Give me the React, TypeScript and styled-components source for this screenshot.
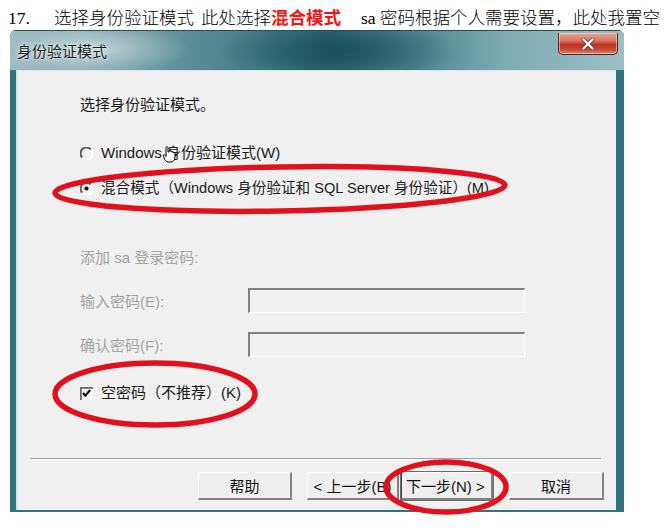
import React from "react";
import styled, { createGlobalStyle } from "styled-components";

const Global = createGlobalStyle`
  html, body { margin: 0; padding: 0; background: #ffffff; }
  body { width: 670px; height: 528px; overflow: hidden; }
  #root { width: 670px; height: 528px; }
`;

const Page = styled.div`
  position: relative;
  width: 670px;
  height: 528px;
  padding-top: 8px;
  box-sizing: border-box;
`;

const Heading = styled.p`
  margin: 0;
  padding-left: 8px;
  height: 20px;
  line-height: 20px;
  font-family: "Liberation Serif", "Noto Sans CJK SC", serif;
  font-size: 17.5px;
  font-weight: 300;
  color: #000;
  white-space: nowrap;
`;

const Num = styled.span`
  display: inline-block;
  width: 46px;
  font-weight: 400;
`;

const Red = styled.span`
  color: #ff1010;
  font-weight: bold;
`;

const Gap = styled.span<{ $w: number }>`
  display: inline-block;
  width: ${(p) => p.$w}px;
`;

const Window = styled.div`
  margin: 2px 0 0 10px;
  width: 614px;
  height: 482px;
  display: flex;
  flex-direction: column;
  border-radius: 6px 6px 0 0;
  overflow: hidden;
  background: #2f7480;
`;

const TitleBar = styled.div`
  height: 40px;
  flex: none;
  display: flex;
  align-items: flex-start;
  justify-content: space-between;
  padding: 0 6px 0 7px;
  box-sizing: border-box;
  border-top: 1px solid #244f57;
  background:
    radial-gradient(ellipse 120px 30px at 330px 20px, rgba(20, 70, 85, 0.75), rgba(20, 70, 85, 0) 100%),
    radial-gradient(ellipse 90px 25px at 90px 18px, rgba(230, 240, 240, 0.55), rgba(230, 240, 240, 0) 100%),
    linear-gradient(90deg, #9fbcc2 0%, #8fb0b7 12%, #5f8f99 28%, #3f7884 42%, #2b6673 52%, #4d8591 66%, #7eaab2 80%, #9dbfc5 100%);
`;

const TitleText = styled.span`
  margin-top: 10px;
  font-family: "Noto Sans CJK SC", sans-serif;
  font-size: 15px;
  line-height: 20px;
  color: #1c1c1c;
  text-shadow: 0 0 6px rgba(255, 255, 255, 0.9), 0 0 2px rgba(255, 255, 255, 0.8);
`;

const CloseButton = styled.div`
  margin-top: 2px;
  width: 60px;
  height: 22px;
  box-sizing: border-box;
  border: 1px solid #4a2320;
  border-top: none;
  border-radius: 0 0 5px 5px;
  display: flex;
  align-items: center;
  justify-content: center;
  background: linear-gradient(180deg, #e7a89a 0%, #d9786a 35%, #c0341f 55%, #c84a36 80%, #dd8b70 100%);
  box-shadow: inset 0 0 0 1px rgba(255, 220, 210, 0.6);
`;

const Frame = styled.div`
  flex: 1;
  display: flex;
  padding: 0 8px 2px 6px;
  background: #2f7480;
`;

const Body = styled.div`
  flex: 1;
  display: flex;
  flex-direction: column;
  background: #f0f0f0;
  border-left: 2px solid #d6e5e8;
  border-top: 1px solid #d8e4e6;
  font-family: "Liberation Sans", "Noto Sans CJK SC", sans-serif;
  font-size: 15px;
  color: #1a1a1a;
`;

const Line = styled.div<{ $top: number; $muted?: boolean }>`
  margin-top: ${(p) => p.$top}px;
  padding-left: 62px;
  height: 20px;
  display: flex;
  align-items: center;
  line-height: 20px;
  white-space: nowrap;
  color: ${(p) => (p.$muted ? "#a3a3a3" : "#1a1a1a")};
`;

const Narrow = styled.span`
  font-size: 14.6px;
`;

const FieldRow = styled.div<{ $top: number }>`
  margin-top: ${(p) => p.$top}px;
  padding-left: 62px;
  height: 25px;
  display: flex;
  align-items: center;
  color: #a3a3a3;
  white-space: nowrap;
`;

const FieldLabel = styled.span`
  width: 168px;
  flex: none;
`;

const TextBox = styled.div`
  width: 277px;
  height: 25px;
  box-sizing: border-box;
  border-top: 2px solid #808080;
  border-left: 2px solid #808080;
  border-right: 1px solid #ffffff;
  border-bottom: 1px solid #ffffff;
  background: #f0f0f0;
`;

const Mark = styled.svg`
  flex: none;
  margin-right: 8px;
`;

const Separator = styled.div`
  margin: 55px 15px 0 12px;
  height: 0;
  border-top: 1px solid #a0a0a0;
  border-bottom: 1px solid #ffffff;
`;

const ButtonRow = styled.div`
  margin-top: 12px;
  display: flex;
  padding-left: 180px;
`;

const Button = styled.div<{ $w: number; $gap: number; $def?: boolean; $left?: boolean }>`
  width: ${(p) => p.$w}px;
  height: 28px;
  margin-left: ${(p) => p.$gap}px;
  box-sizing: border-box;
  display: flex;
  align-items: center;
  justify-content: ${(p) => (p.$left ? "flex-start" : "center")};
  padding-left: ${(p) => (p.$left ? 4 : 0)}px;
  background: #efefef;
  border-top: 1px solid #ffffff;
  border-left: 1px solid ${(p) => (p.$def ? "#404040" : "#ffffff")};
  border-right: 2px solid #808080;
  border-bottom: 2px solid #808080;
  outline: ${(p) => (p.$def ? "1px solid #6a6a6a" : "none")};
  font-size: 15px;
  color: #111;
  white-space: nowrap;
`;

const Overlay = styled.svg`
  position: absolute;
  left: 0;
  top: 0;
  pointer-events: none;
`;

const Radio = ({ on }: { on?: boolean }) => (
  <Mark width="13" height="13" viewBox="0 0 13 13">
    <path d="M10.8 2.4 A5.5 5.5 0 0 0 2.2 10.6" fill="none" stroke="#5e5e5e" strokeWidth="2" />
    <path d="M2.6 10.9 A5.5 5.5 0 0 0 10.9 2.6" fill="none" stroke="#ffffff" strokeWidth="1.6" />
    {on && <circle cx="6.5" cy="6.5" r="2.1" fill="#111" />}
  </Mark>
);

const Check = () => (
  <Mark width="13" height="13" viewBox="0 0 13 13">
    <rect x="0" y="0" width="13" height="13" fill="#f6f6f6" />
    <path d="M0.9 13 V0.9 H13" fill="none" stroke="#6a6a6a" strokeWidth="1.8" />
    <path d="M3 6 L5.3 8.6 L10.2 3" fill="none" stroke="#111" strokeWidth="2.2" />
  </Mark>
);

export default function App() {
  return (
    <>
      <Global />
      <Page>
        <Heading>
          <Num>17.</Num>
          选择身份验证模式<Gap $w={7} />此处选择<Red>混合模式</Red>
          <Gap $w={20} />sa 密码根据个人需要设置，此处我置空
        </Heading>
        <Window>
          <TitleBar>
            <TitleText>身份验证模式</TitleText>
            <CloseButton>
              <svg width="14" height="12" viewBox="0 0 14 12">
                <path d="M2.5 1.5 L11.5 10.5 M11.5 1.5 L2.5 10.5" stroke="#4a2a2a" strokeWidth="3.6" strokeLinecap="round" />
                <path d="M2.5 1.5 L11.5 10.5 M11.5 1.5 L2.5 10.5" stroke="#ffffff" strokeWidth="2.4" strokeLinecap="round" />
              </svg>
            </CloseButton>
          </TitleBar>
          <Frame>
            <Body>
              <Line $top={24}>选择身份验证模式。</Line>
              <Line $top={28}>
                <Radio />
                Windows 身份验证模式(W)
              </Line>
              <Line $top={15}>
                <Radio on />
                <Narrow>混合模式（Windows 身份验证和 SQL Server 身份验证）(M)</Narrow>
              </Line>
              <Line $top={50} $muted>
                添加 sa 登录密码:
              </Line>
              <FieldRow $top={20}>
                <FieldLabel>输入密码(E):</FieldLabel>
                <TextBox />
              </FieldRow>
              <FieldRow $top={19}>
                <FieldLabel>确认密码(F):</FieldLabel>
                <TextBox />
              </FieldRow>
              <Line $top={26}>
                <Check />
                空密码（不推荐）(K)
              </Line>
              <Separator />
              <ButtonRow>
                <Button $w={94} $gap={0}>帮助</Button>
                <Button $w={92} $gap={15}>&lt; 上一步(B)</Button>
                <Button $w={92} $gap={2} $def $left>下一步(N) &gt;</Button>
                <Button $w={95} $gap={16}>取消</Button>
              </ButtonRow>
            </Body>
          </Frame>
        </Window>
        <Overlay width="670" height="528" viewBox="0 0 670 528">
          <g transform="translate(163 146)">
            <path
              d="M3 1.5 C3 0.5 5 0.5 5 1.5 V6 H6 V5 C6 4 8 4 8 5 V6 C8 5 10 5 10 6 V7 C10 6 12 6 12 7 V11 C12 14 10 16 8 16 H5 C3.5 16 2.5 15 1.5 13 L0.3 10 C0 9 1.5 8.3 2.2 9.2 L3 10.5 Z"
              fill="#ffffff"
              stroke="#000"
              strokeWidth="1"
            />
          </g>
          <ellipse cx="280" cy="189" rx="225" ry="22" fill="none" stroke="#e2101c" strokeWidth="5.5" transform="rotate(-1 280 189)" />
          <ellipse cx="155" cy="394" rx="100" ry="31" fill="none" stroke="#e2101c" strokeWidth="5.5" />
          <ellipse cx="446" cy="487" rx="60" ry="25" fill="none" stroke="#e2101c" strokeWidth="5.5" />
        </Overlay>
      </Page>
    </>
  );
}
